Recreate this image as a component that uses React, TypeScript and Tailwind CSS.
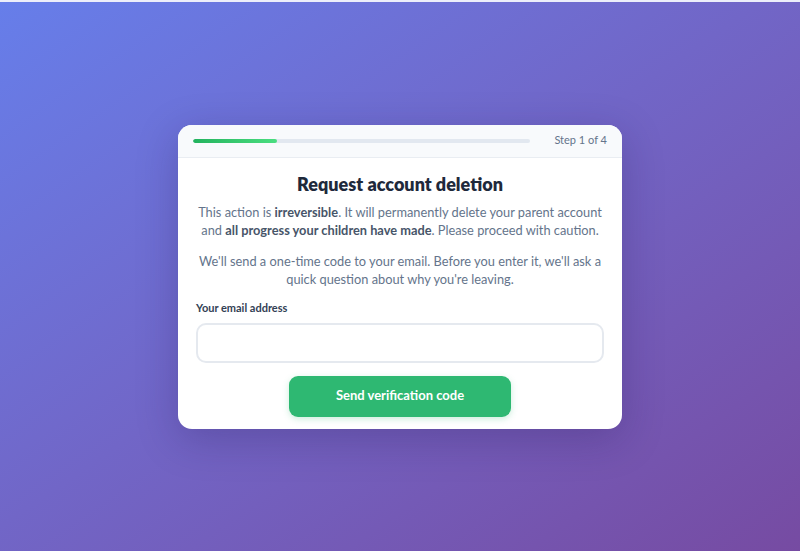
import { useState } from "react";

export default function App() {
  const [email, setEmail] = useState("");
  const step = 1;
  const totalSteps = 4;

  return (
    <div
      className="min-h-screen flex flex-col bg-gradient-to-br from-[#667eea] to-[#764ba2]"
      style={{ fontFamily: "Lato, 'Noto Sans', sans-serif" }}
    >
      <div className="h-[2px] bg-[#eceefa]" />
      <main className="flex-1 flex items-center justify-center">
        <div className="w-[444px] bg-white rounded-[14px] shadow-[0_10px_40px_rgba(30,20,80,0.25)] overflow-hidden">
          {/* Progress header */}
          <div className="h-[33px] flex items-center gap-6 px-[15px] bg-[#f8fafc] border-b border-[#e9edf2]">
            <div className="flex-1 h-[4px] rounded-full bg-[#e2e8f0] overflow-hidden">
              <div
                className="h-full rounded-full bg-gradient-to-r from-[#22b35e] to-[#4ade80]"
                style={{ width: `${(step / totalSteps) * 100}%` }}
              />
            </div>
            <span className="text-[11px] text-[#64748b]">
              Step {step} of {totalSteps}
            </span>
          </div>

          {/* Body */}
          <div className="px-[18px] pt-[15px] pb-[12px]">
            <h1 className="text-center text-[18px] leading-[22px] font-extrabold text-[#1e293b]">
              Request account deletion
            </h1>
            <p className="mt-[8px] text-center text-[12.8px] leading-[18px] text-[#64748b]">
              This action is <strong className="font-bold text-[#475569]">irreversible</strong>. It will
              permanently delete your parent account and{" "}
              <strong className="font-bold text-[#475569]">all progress your children have made</strong>.
              Please proceed with caution.
            </p>
            <p className="mt-[13px] text-center text-[12.8px] leading-[18px] text-[#64748b]">
              We'll send a one-time code to your email. Before you enter it, we'll ask a quick question
              about why you're leaving.
            </p>

            <label className="block mt-[12px] text-[11px] leading-[16px] font-bold text-[#334155]">
              Your email address
            </label>
            <input
              type="email"
              value={email}
              onChange={(e) => setEmail(e.target.value)}
              className="mt-[7px] w-full h-[40px] rounded-[10px] border-2 border-[#e5e9ef] px-3 text-[13px] text-[#1e293b] outline-none"
            />

            <div className="mt-[13px] flex justify-center">
              <button className="w-[222px] h-[41px] rounded-[9px] bg-[#2eb872] text-white text-[13px] font-bold shadow-[0_2px_6px_rgba(46,184,114,0.25)]">
                Send verification code
              </button>
            </div>
          </div>
        </div>
      </main>
    </div>
  );
}
